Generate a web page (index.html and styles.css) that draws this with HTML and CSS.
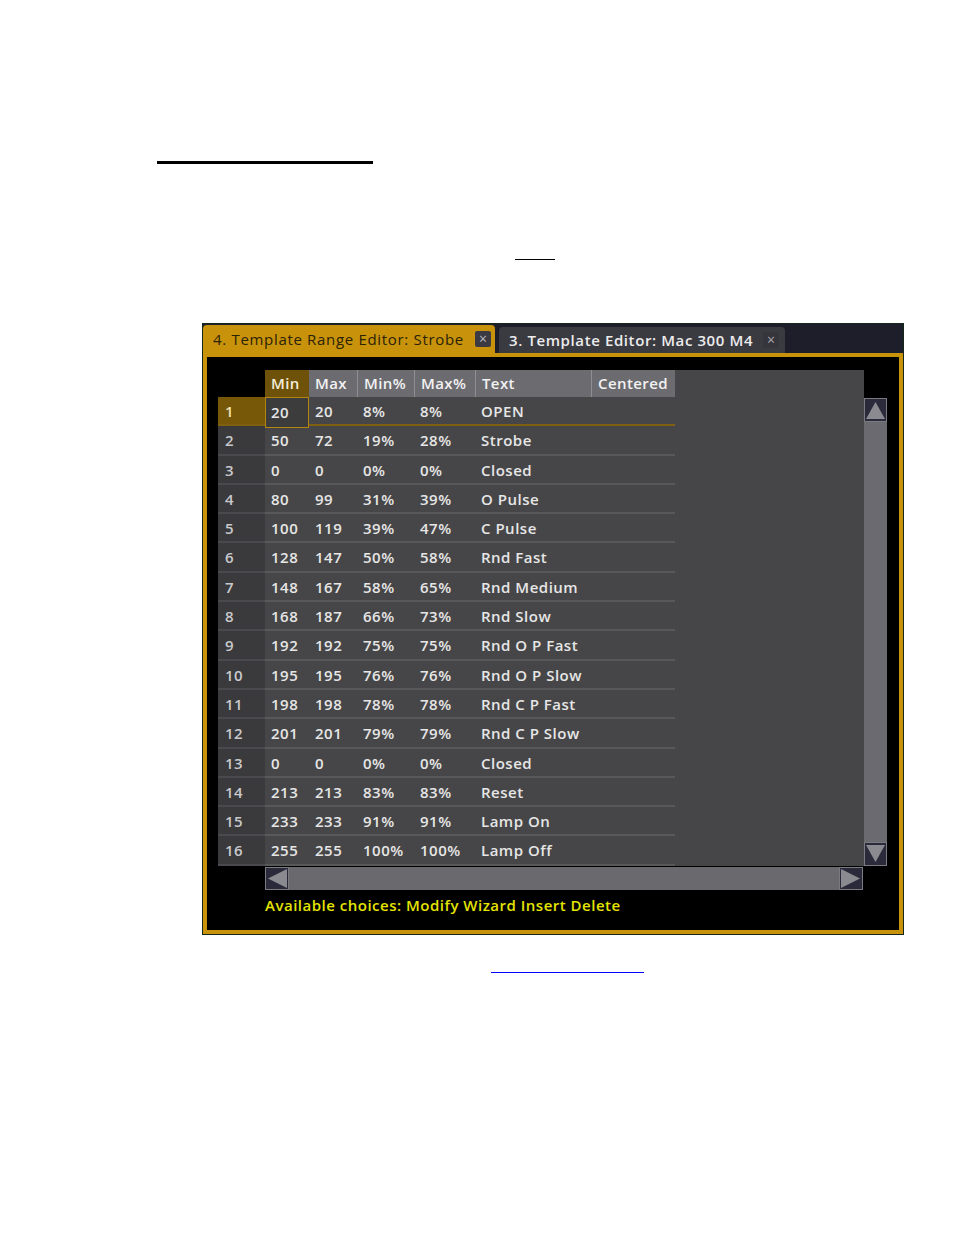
FILE: index.html
```html
<!DOCTYPE html>
<html>
<head>
<meta charset="utf-8">
<link rel="stylesheet" href="styles.css">
</head>
<body>
<div class="page">
  <div class="rule-top"></div>
  <div class="rule-small"></div>
  <div class="window">
    <div class="tabbar">
      <div class="tab active"><span class="tab-title">4. Template Range Editor: Strobe</span><span class="close dark">×</span></div>
      <div class="tab inactive"><span class="tab-title">3. Template Editor: Mac 300 M4</span><span class="close light">×</span></div>
    </div>
    <div class="frame">
      <div class="sheet">
        <div class="corner"></div>
        <div class="grid">
          <div class="hrow">
            <div class="hc sel">Min</div><div class="hc">Max</div><div class="hc">Min%</div><div class="hc">Max%</div><div class="hc">Text</div><div class="hc">Centered</div>
          </div>
          <div class="row first"><div class="c cur">20</div><div class="c">20</div><div class="c">8%</div><div class="c">8%</div><div class="c">OPEN</div><div class="c"></div></div>
          <div class="row"><div class="c">50</div><div class="c">72</div><div class="c">19%</div><div class="c">28%</div><div class="c">Strobe</div><div class="c"></div></div>
          <div class="row"><div class="c">0</div><div class="c">0</div><div class="c">0%</div><div class="c">0%</div><div class="c">Closed</div><div class="c"></div></div>
          <div class="row"><div class="c">80</div><div class="c">99</div><div class="c">31%</div><div class="c">39%</div><div class="c">O Pulse</div><div class="c"></div></div>
          <div class="row"><div class="c">100</div><div class="c">119</div><div class="c">39%</div><div class="c">47%</div><div class="c">C Pulse</div><div class="c"></div></div>
          <div class="row"><div class="c">128</div><div class="c">147</div><div class="c">50%</div><div class="c">58%</div><div class="c">Rnd Fast</div><div class="c"></div></div>
          <div class="row"><div class="c">148</div><div class="c">167</div><div class="c">58%</div><div class="c">65%</div><div class="c">Rnd Medium</div><div class="c"></div></div>
          <div class="row"><div class="c">168</div><div class="c">187</div><div class="c">66%</div><div class="c">73%</div><div class="c">Rnd Slow</div><div class="c"></div></div>
          <div class="row"><div class="c">192</div><div class="c">192</div><div class="c">75%</div><div class="c">75%</div><div class="c">Rnd O P Fast</div><div class="c"></div></div>
          <div class="row"><div class="c">195</div><div class="c">195</div><div class="c">76%</div><div class="c">76%</div><div class="c">Rnd O P Slow</div><div class="c"></div></div>
          <div class="row"><div class="c">198</div><div class="c">198</div><div class="c">78%</div><div class="c">78%</div><div class="c">Rnd C P Fast</div><div class="c"></div></div>
          <div class="row"><div class="c">201</div><div class="c">201</div><div class="c">79%</div><div class="c">79%</div><div class="c">Rnd C P Slow</div><div class="c"></div></div>
          <div class="row"><div class="c">0</div><div class="c">0</div><div class="c">0%</div><div class="c">0%</div><div class="c">Closed</div><div class="c"></div></div>
          <div class="row"><div class="c">213</div><div class="c">213</div><div class="c">83%</div><div class="c">83%</div><div class="c">Reset</div><div class="c"></div></div>
          <div class="row"><div class="c">233</div><div class="c">233</div><div class="c">91%</div><div class="c">91%</div><div class="c">Lamp On</div><div class="c"></div></div>
          <div class="row"><div class="c">255</div><div class="c">255</div><div class="c">100%</div><div class="c">100%</div><div class="c">Lamp Off</div><div class="c"></div></div>
        </div>
        <div class="corner"></div>
        <div class="rowheads">
          <div class="rh first">1</div><div class="rh">2</div><div class="rh">3</div><div class="rh">4</div>
          <div class="rh">5</div><div class="rh">6</div><div class="rh">7</div><div class="rh">8</div>
          <div class="rh">9</div><div class="rh">10</div><div class="rh">11</div><div class="rh">12</div>
          <div class="rh">13</div><div class="rh">14</div><div class="rh">15</div><div class="rh">16</div>
        </div>
        <div class="vscroll">
          <div class="sbtn"><svg width="21" height="20" viewBox="0 0 21 20"><polygon points="10.5,2 20,19 1,19" fill="#8a8a90"/></svg></div>
          <div class="strack"></div>
          <div class="sbtn"><svg width="21" height="20" viewBox="0 0 21 20"><polygon points="1,1 20,1 10.5,18" fill="#8a8a90"/></svg></div>
        </div>
        <div class="empty"></div>
        <div class="hscroll">
          <div class="hbtn"><svg width="22" height="21" viewBox="0 0 22 21"><polygon points="2,10.5 21,1 21,20" fill="#8a8a90"/></svg></div>
          <div class="htrack"></div>
          <div class="hbtn"><svg width="22" height="21" viewBox="0 0 22 21"><polygon points="1,1 20,10.5 1,20" fill="#8a8a90"/></svg></div>
        </div>
      </div>
      <div class="choices">Available choices: Modify Wizard Insert Delete</div>
    </div>
  </div>
  <div class="rule-blue"></div>
</div>
</body>
</html>
```
FILE: styles.css
```css
html, body {
  margin: 0;
  padding: 0;
  background: #ffffff;
}
.page {
  width: 954px;
  height: 1235px;
  overflow: hidden;
}
.rule-top {
  margin: 161px 0 0 157px;
  width: 216px;
  height: 3px;
  background: #000;
}
.rule-small {
  margin: 95px 0 0 515px;
  width: 40px;
  height: 1px;
  background: #000;
}
.rule-blue {
  margin: 37px 0 0 491px;
  width: 153px;
  height: 1px;
  background: #0000ff;
}
.window {
  margin: 63px 0 0 202px;
  width: 702px;
  height: 612px;
  box-sizing: border-box;
  border: 1px solid #15261b;
  background: #1e1e2b;
  display: flex;
  flex-direction: column;
  font-family: "Open Sans", "Noto Sans", sans-serif;
}
.tabbar {
  height: 29px;
  display: flex;
  align-items: flex-end;
  gap: 4px;
  background: #1e1e2b;
}
.tab {
  display: flex;
  align-items: center;
  box-sizing: border-box;
  border-radius: 4px 4px 0 0;
  font-size: 15px;
}
.tab.active {
  width: 292px;
  height: 28px;
  background: #c8930b;
  color: #2b2208;
  padding: 0 4px 0 10px;
  letter-spacing: 0.68px;
}
.tab.inactive {
  width: 286px;
  height: 26px;
  background: #3a3a41;
  color: #ececec;
  font-weight: 600;
  padding: 0 6px 0 10px;
  letter-spacing: 0.6px;
}
.tab-title {
  flex: 1;
  white-space: nowrap;
}
.close {
  width: 16px;
  height: 16px;
  display: flex;
  align-items: center;
  justify-content: center;
  font-size: 14px;
  line-height: 1;
  letter-spacing: 0;
  font-weight: 400;
}
.close.dark {
  background: #3b3a43;
  color: #b8b8c0;
  border-radius: 2px;
}
.close.light {
  background: #35353b;
  color: #a8a8b0;
}
.frame {
  flex: 1;
  box-sizing: border-box;
  border: 4px solid #c8930b;
  background: #000;
  padding: 13px 0 0 11px;
}
.sheet {
  display: grid;
  grid-template-columns: 47px 599px 23px;
  grid-template-rows: 27px 469px 24px;
}
.corner, .empty {
  background: #000;
}
.grid {
  grid-column: 2;
  grid-row: 1 / span 2;
  background: #464648;
  display: flex;
  flex-direction: column;
}
.hrow, .row {
  display: grid;
  grid-template-columns: 44px 48px 57px 61px 116px 84px;
  width: 410px;
}
.hrow {
  height: 27px;
}
.hc {
  background: #6b6b70;
  color: #f2f2f2;
  font-size: 15px;
  font-weight: 600;
  line-height: 27px;
  padding-left: 6px;
  border-left: 1px solid #8e8e94;
  letter-spacing: 0.4px;
}
.hc:first-child {
  border-left: none;
}
.hc.sel {
  background: #6f5209;
  color: #f4ecd8;
}
.hc.sel + .hc {
  border-left: none;
}
.row {
  height: 29.3px;
  box-sizing: border-box;
  border-bottom: 2px solid #58585b;
}
.row.first {
  border-bottom-color: #7e6010;
}
.c {
  color: #e6e6e6;
  font-size: 15px;
  font-weight: 600;
  line-height: 29px;
  padding-left: 6px;
  white-space: nowrap;
  letter-spacing: 0.5px;
}
.c.cur {
  box-shadow: inset 0 0 0 1px #b3870f;
  background: #3c3c3d;
  line-height: 31px;
  margin-bottom: -2px;
}
.rowheads {
  grid-column: 1;
  grid-row: 2;
  background: #3a3a3d;
  display: flex;
  flex-direction: column;
}
.rh {
  height: 29.3px;
  box-sizing: border-box;
  border-bottom: 2px solid #4a4a4e;
  color: #c9c9cc;
  font-size: 15px;
  font-weight: 600;
  line-height: 29px;
  padding-left: 7px;
  letter-spacing: 0.4px;
}
.rh.first {
  background: #775808;
  border-bottom-color: #7e6010;
  color: #efe2bb;
}
.vscroll {
  grid-column: 3;
  grid-row: 2;
  margin-top: 1px;
  display: flex;
  flex-direction: column;
  background: #6a6a70;
}
.sbtn {
  height: 24px;
  box-sizing: border-box;
  border: 1px solid #7a7a82;
  background: #2a2a3b;
  display: flex;
  align-items: center;
  justify-content: center;
}
.sbtn svg, .hbtn svg {
  display: block;
}
.strack {
  flex: 1;
}
.hscroll {
  grid-column: 2;
  grid-row: 3;
  width: 598px;
  margin-top: 1px;
  display: flex;
  background: #6a6a6e;
}
.hbtn {
  width: 24px;
  box-sizing: border-box;
  border: 1px solid #7a7a82;
  background: #2a2a3b;
  display: flex;
  align-items: center;
  justify-content: center;
}
.htrack {
  flex: 1;
}
.choices {
  margin-top: 5px;
  padding-left: 47px;
  color: #e4e400;
  font-size: 15px;
  font-weight: 600;
  line-height: 20px;
  letter-spacing: 0.5px;
}
```
